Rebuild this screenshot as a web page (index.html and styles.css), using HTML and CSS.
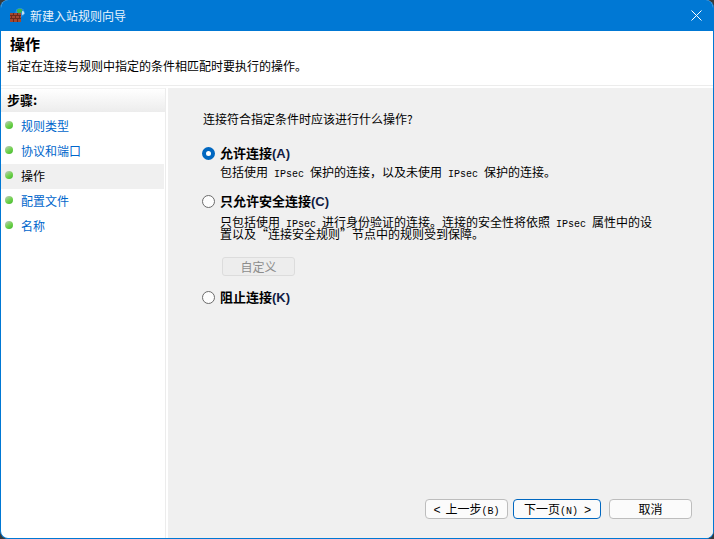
FILE: index.html
```html
<!DOCTYPE html>
<html lang="zh-CN">
<head>
<meta charset="utf-8">
<title>新建入站规则向导</title>
<link rel="stylesheet" href="styles.css">
</head>
<body>
<div class="window">
  <header class="titlebar">
    <svg class="app-icon" width="16" height="15" viewBox="0 0 16 15">
      <circle cx="10" cy="4.500" r="4.500" fill="#2f8fe0"/>
      <path d="M7 1.500l3-1 2.500 1 -1 3-3 1-1.500-2z" fill="#3fb54a"/>
      <path d="M12 3l2 .5 .5 2.500-2.500 1z" fill="#bfe0f5"/>
      <rect x="0" y="5" width="11" height="9" fill="#a5482f"/>
      <path d="M0 7.500h11M0 10.500h11M3.500 5v2.500M7.500 5v2.500M1.500 7.500v3M5.500 7.500v3M9.500 7.500v3M3.500 10.500v3.500M7.500 10.500v3.500" stroke="#6d2a1a" stroke-width="1" fill="none"/>
    </svg>
    <span class="title-text">新建入站规则向导</span>
    <svg class="close-icon" width="11" height="11" viewBox="0 0 11 11"><path d="M.5.5l10 10M10.500.5l-10 10" stroke="#fff" stroke-width="1" fill="none"/></svg>
  </header>
  <section class="page-head">
    <h1 class="page-title">操作</h1>
    <p class="page-desc">指定在连接与规则中指定的条件相匹配时要执行的操作。</p>
  </section>
  <div class="main">
    <nav class="steps">
      <div class="steps-head">步骤:</div>
      <ul class="step-list">
        <li class="step"><i class="dot"></i>规则类型</li>
        <li class="step"><i class="dot"></i>协议和端口</li>
        <li class="step current"><i class="dot"></i>操作</li>
        <li class="step"><i class="dot"></i>配置文件</li>
        <li class="step"><i class="dot"></i>名称</li>
      </ul>
    </nav>
    <main class="content">
      <p class="question">连接符合指定条件时应该进行什么操作?</p>
      <div class="options">
        <div class="option first">
          <i class="radio checked"></i>
          <div class="opt-body">
            <div class="opt-label">允许连接<span class="key">(A)</span></div>
            <p class="opt-desc">包括使用<span class="mono"> IPsec </span>保护的连接，以及未使用<span class="mono"> IPsec </span>保护的连接。</p>
          </div>
        </div>
        <div class="option second">
          <i class="radio"></i>
          <div class="opt-body">
            <div class="opt-label">只允许安全连接<span class="key">(C)</span></div>
            <p class="opt-desc tight">只包括使用<span class="mono"> IPsec </span>进行身份验证的连接。连接的安全性将依照<span class="mono"> IPsec </span>属性中的设置以及“连接安全规则”节点中的规则受到保障。</p>
            <button class="custom" disabled>自定义</button>
          </div>
        </div>
        <div class="option third">
          <i class="radio"></i>
          <div class="opt-body">
            <div class="opt-label">阻止连接<span class="key">(K)</span></div>
          </div>
        </div>
      </div>
      <footer class="actions">
        <button class="btn"><span class="chev">&lt;</span><span class="mono"> </span>上一步<span class="mono">(B)</span></button>
        <button class="btn primary">下一页<span class="mono">(N) </span><span class="chev">&gt;</span></button>
        <button class="btn cancel">取消</button>
      </footer>
    </main>
  </div>
</div>
</body>
</html>
```
FILE: styles.css
```css
* { box-sizing: border-box; }
html, body { margin: 0; height: 100%; background: #3a3a3a; }
body { font-family: "Noto Sans CJK SC", "Liberation Sans", sans-serif; font-size: 12px; color: #000; }
.window {
  width: 714px; height: 539px; display: flex; flex-direction: column;
  background: #fff; border: 1px solid #0078d4; border-top: 0;
  border-radius: 8px; overflow: hidden;
}
.titlebar { flex: none; height: 31px; background: #0078d4; display: flex; align-items: center; padding: 0 10px 0 9px; color: #fff; }
.app-icon { flex: none; margin-right: 4px; }
.title-text { flex: 1; font-size: 12px; color: #e8f3fc; }
.close-icon { flex: none; margin-right: 1px; }
.page-head { flex: none; height: 55px; padding: 3px 0 0 9px; border-bottom: 1px solid #ececec; }
.page-title { margin: 0; font-size: 15px; line-height: 20px; font-weight: 700; }
.page-desc { margin: 3px 0 0 -3px; font-size: 12px; line-height: 18px; }
.main { flex: 1; display: flex; min-height: 0; padding-top: 2px; }
.steps { flex: none; width: 165px; border-right: 1px solid #ececec; border-top: 1px solid #f2f2f2; }
.steps-head { height: 23px; padding-left: 6px; font-size: 13px; font-weight: 700; line-height: 22px; background: linear-gradient(#ffffff, #ececec); }
.step-list { list-style: none; margin: 2px 0 0; padding: 0; }
.step { display: flex; align-items: center; height: 25px; width: 163px; padding: 0 0 2px 20px; position: relative; color: #0066cc; font-size: 12px; }
.step.current { background: #f0f0f0; color: #000; }
.dot { position: absolute; left: 4px; top: 7px; width: 8px; height: 8px; border-radius: 50%; background: linear-gradient(145deg, #b9c9b4 10%, #6fd24c 55%, #3fb52a); }
.content { flex: 1; margin-left: 2px; background: #f0f0f0; padding: 22px 0 0 35px; display: flex; flex-direction: column; }
.question { margin: 0; line-height: 18px; font-size: 12px; }
.options { margin-left: -1px; }
.option { display: flex; align-items: flex-start; }
.option.first { margin-top: 16px; }
.option.second { margin-top: 13px; }
.option.third { margin-top: 12px; }
.radio { flex: none; width: 13px; height: 13px; margin: 3px 5px 0 0; border: 1px solid #6b6b6b; border-radius: 50%; background: #fdfdfd; }
.radio.checked { border: 4px solid #0067c0; background: #fff; }
.opt-body { flex: 1; min-width: 0; }
.opt-label { font-weight: 700; line-height: 18px; font-size: 13px; }
.key { color: #111c44; font-family: "Liberation Sans", sans-serif; }
.opt-desc { margin: 2px 0 0; line-height: 14px; font-size: 12px; width: 436px; }
.opt-desc.tight { line-height: 12px; margin-top: 5px; }
.mono { font-family: "Liberation Mono", monospace; font-size: 10px; line-height: 0; white-space: pre; }
.chev { display: inline-block; width: 6px; font-family: "Liberation Mono", monospace; font-size: 12px; line-height: 0; }
.custom { display: block; width: 73px; height: 19px; margin: 17px 0 0 2px; padding: 0; background: #ededed; border: 1px solid #dcdcdc; border-radius: 3px; color: #8c8c8c; font: inherit; }
.actions { margin-top: auto; margin-bottom: 19px; display: flex; align-items: center; margin-left: 222px; }
.btn { height: 20px; width: 83px; padding: 0; margin-right: 5px; background: #fbfbfb; border: 1px solid #bdbdbd; border-radius: 4px; color: #000; font: inherit; line-height: 16px; }
.btn.primary { width: 88px; border: 1px solid #0067c0; margin-right: 8px; }
```
